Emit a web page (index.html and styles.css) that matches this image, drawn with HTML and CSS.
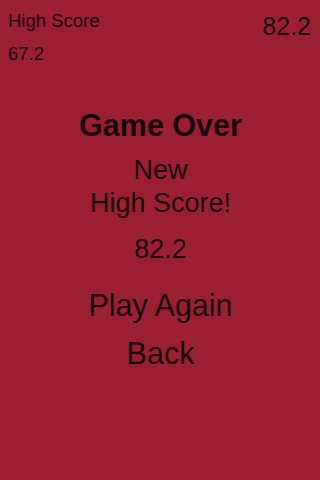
FILE: index.html
```html
<!DOCTYPE html>
<html>
<head>
<meta charset="utf-8">
<link rel="stylesheet" href="styles.css">
</head>
<body>
<div class="screen">
  <header class="top">
    <div class="best">
      <div class="best-label">High Score</div>
      <div class="best-value">67.2</div>
    </div>
    <div class="current">82.2</div>
  </header>
  <main class="panel">
    <h1 class="title">Game Over</h1>
    <p class="message">New<br>High Score!</p>
    <p class="score">82.2</p>
    <div class="actions">
      <div class="action action-play">Play Again</div>
      <div class="action action-back">Back</div>
    </div>
  </main>
</div>
</body>
</html>
```
FILE: styles.css
```css
html, body {
  margin: 0;
  padding: 0;
  background: #9b1f30;
}
.screen {
  width: 320px;
  height: 480px;
  background: #9b1f30;
  color: #180a0c;
  font-family: "Liberation Sans", Arial, Helvetica, sans-serif;
  overflow: hidden;
}
.top {
  display: flex;
  justify-content: space-between;
  align-items: flex-start;
  padding: 4px 9px 0 8px;
}
.best {
  font-size: 18.5px;
  line-height: 33px;
}
.current {
  font-size: 25px;
  line-height: 30px;
  margin-top: 7px;
}
.panel {
  display: flex;
  flex-direction: column;
  align-items: center;
  text-align: center;
  padding-left: 1px;
}
.title {
  margin: 37px 0 0;
  font-size: 30.5px;
  font-weight: bold;
  line-height: 36px;
}
.message {
  margin: 11px 0 0;
  font-size: 27px;
  line-height: 33px;
}
.score {
  margin: 13px 0 0;
  font-size: 27px;
  line-height: 33px;
}
.actions {
  display: flex;
  flex-direction: column;
  align-items: center;
  gap: 12px;
  margin-top: 21px;
}
.action {
  font-size: 30.5px;
  line-height: 36px;
}
```
